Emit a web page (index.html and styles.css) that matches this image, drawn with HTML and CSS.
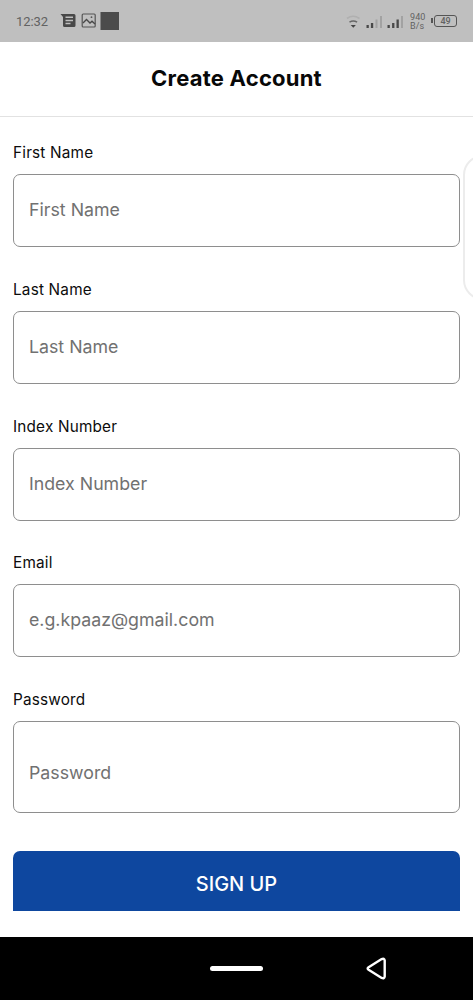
FILE: index.html
```html
<!DOCTYPE html>
<html lang="en">
<head>
<meta charset="utf-8">
<meta name="viewport" content="width=device-width, initial-scale=1">
<title>Create Account</title>
<link rel="stylesheet" href="styles.css">
</head>
<body>
<div class="screen">
  <div class="status">
    <span class="clock">12:32</span>
    <svg class="notices" width="60" height="20" viewBox="0 0 60 20">
      <path fill="#484848" fill-rule="evenodd" d="M.5 3H14q1.500 0 1.500 1.500V14.500q0 1.500-1.500 1.500H4.500q-1.500 0-1.500-1.500V6ZM5.500 5.600v1.500H13V5.600ZM5.500 8.700v1.500H13V8.700ZM5.500 11.800v1.500H10.500v-1.500Z"/>
      <rect x="22.200" y="3" width="13" height="13" rx="1" fill="none" stroke="#555" stroke-width="1.200"/>
      <path d="M23 12l3.500-3.500 3.500 3.500 2-1.800 3 2.800" fill="none" stroke="#484848" stroke-width="1.300"/>
      <circle cx="31.500" cy="6.200" r=".9" fill="#555"/>
      <rect x="40.500" y="1" width="18.500" height="18" fill="#4b4b4b"/>
    </svg>
    <svg class="signals" width="58" height="20" viewBox="0 0 58 20">
      <path d="M1 6.500q6-4.500 12.500 0" fill="none" stroke="#b0b0b0" stroke-width="1.700"/>
      <path d="M3.500 10.200q3.700-2.400 7.600 0" fill="none" stroke="#666" stroke-width="1.500"/>
      <path d="M4.700 13h5.200L7.300 15.800Z" fill="#444"/>
      <g fill="#484848">
        <rect x="20.500" y="13" width="2.300" height="3"/><rect x="24.900" y="11" width="2.300" height="5"/>
        <rect x="41.500" y="13" width="2.300" height="3"/><rect x="46.100" y="11" width="2.300" height="5"/><rect x="50.500" y="7.500" width="2.300" height="8.500"/>
      </g>
      <g fill="#a2a2a2"><rect x="29.500" y="7.500" width="2" height="8.500"/><rect x="34" y="4" width="2" height="12"/><rect x="55" y="4" width="2" height="12"/></g>
    </svg>
    <span class="rate">940<br>B/s</span>
    <span class="battery">49</span>
  </div>
  <header class="header"><h1 class="title">Create Account</h1></header>
  <form class="form">
    <div class="field"><label class="label" for="first">First Name</label><input class="input" id="first" placeholder="First Name"></div>
    <div class="field"><label class="label" for="last">Last Name</label><input class="input" id="last" placeholder="Last Name"></div>
    <div class="field"><label class="label" for="index">Index Number</label><input class="input" id="index" placeholder="Index Number"></div>
    <div class="field"><label class="label" for="email">Email</label><input class="input" id="email" placeholder="e.g.kpaaz@gmail.com"></div>
    <div class="field"><label class="label" for="password">Password</label><input class="input input-password" id="password" type="password" placeholder="Password"></div>
    <button class="submit" type="button">SIGN UP</button>
  </form>
  <div class="nav">
    <span class="home"></span>
    <svg class="back" width="24" height="26" viewBox="0 0 24 26"><path d="M3.600 11.200 16.700 3.100Q19.300 1.900 19.700 4.500V20.500Q19.300 23.100 16.700 21.900L3.600 13.800Q1.700 12.500 3.600 11.200Z" fill="none" stroke="#fff" stroke-width="2.400" stroke-linejoin="round"/></svg>
  </div>
  <div class="edge-panel"></div>
</div>
</body>
</html>
```
FILE: styles.css
```css
* { box-sizing: border-box; }
body { margin: 0; background: #fff; font-family: Inter, sans-serif; }
.screen { position: relative; width: 473px; height: 1000px; overflow: hidden; display: flex; flex-direction: column; }
.status { height: 42px; flex: none; background: #bfbfbf; display: flex; align-items: center; padding: 0 16px; color: #626262; font-family: Roboto, sans-serif; }
.clock { font-size: 13px; letter-spacing: -.1px; width: 44px; padding-top: 1px; }
.notices { display: block; }
.signals { display: block; margin-left: auto; margin-top: 2px; }
.rate { font-size: 9px; line-height: 9px; width: 17px; margin-left: 6px; text-align: left; letter-spacing: .1px; margin-top: 1px; }
.battery { position: relative; width: 23px; height: 12px; margin-left: 7px; border: 1.500px solid #555; border-radius: 3px; font-size: 9px; font-weight: 500; line-height: 10px; text-align: center; }
.battery::before { content: ""; position: absolute; left: -4px; top: 2px; width: 2px; height: 5px; background: #555; }
.header { height: 75px; flex: none; border-bottom: 1px solid #e2e2e2; display: flex; align-items: center; justify-content: center; padding-bottom: 2px; }
.title { margin: 0; font-size: 22px; font-weight: 700; line-height: 28px; letter-spacing: .22px; color: #080808; }
.form { flex: 1; padding: 25px 13px 0; display: flex; flex-direction: column; }
.field { display: flex; flex-direction: column; margin-bottom: 31.800px; }
.label { font-size: 15.300px; line-height: 21px; margin-bottom: 11px; color: #0c0c0c; letter-spacing: .2px; }
.input { width: 100%; height: 73px; padding: 0 15px 2px; border: 1px solid #8e8e8e; border-radius: 7px; background: #fff; font-family: inherit; font-size: 17.750px; color: #222; }
.input::placeholder { color: #717171; opacity: 1; }
.input-password { height: 92px; padding-top: 12px; }
.submit { height: 60px; flex: none; margin-top: 6px; padding: 6px 0 0; border: 0; border-radius: 7px 7px 0 0; background: #0e479f; color: #fff; font-family: inherit; font-size: 20px; font-weight: 500; }
.nav { height: 63px; flex: none; background: #000; display: grid; grid-template-columns: 210px 53px 1fr; align-items: center; }
.home { grid-column: 2; height: 5px; border-radius: 3px; background: #fff; }
.back { margin-left: 102px; display: block; }
.edge-panel { position: absolute; left: 463px; top: 155px; width: 40px; height: 145px; border: 2px solid #ececec; border-radius: 20px; background: #fff; }
```
